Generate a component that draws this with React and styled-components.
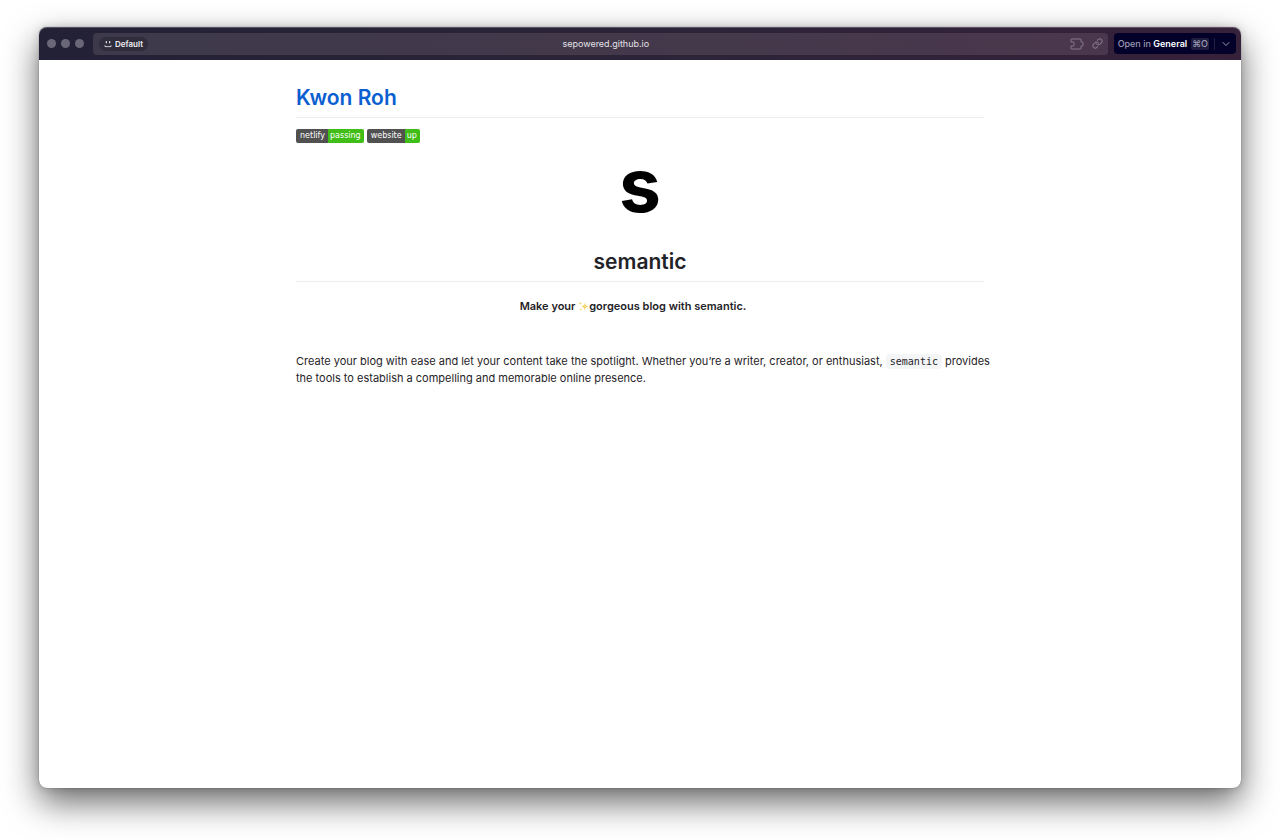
import React from 'react';
import styled, { createGlobalStyle } from 'styled-components';

const GlobalStyle = createGlobalStyle`
  *, *::before, *::after { box-sizing: border-box; }
  body {
    margin: 0;
    background: #fff;
    color: #1f2328;
    font-family: Inter, "Liberation Sans", sans-serif;
  }
  button { border: 0; padding: 0; background: none; font: inherit; color: inherit; cursor: pointer; }
  a { color: inherit; text-decoration: none; }
`;

const Desktop = styled.div`
  display: flex;
  min-height: 100vh;
  padding: 27px 39px 52px;
  overflow: hidden;
`;

const Window = styled.div`
  flex: 1;
  min-width: 0;
  display: flex;
  flex-direction: column;
  background: #fff;
  border-radius: 8px;
  box-shadow: 0 0 1px 0 rgba(0, 0, 0, 0.6), 0 0 8px rgba(0, 0, 0, 0.15), 0 14px 34px rgba(0, 0, 0, 0.6);
`;

const TitleBar = styled.header`
  display: flex;
  align-items: center;
  height: 33px;
  padding: 0 5px 0 8px;
  border-radius: 8px 8px 0 0;
  box-shadow: inset 0 1px 0 rgba(255, 255, 255, 0.22);
  background: linear-gradient(90deg, #232136 0%, #2b2438 50%, #36213a 100%);
`;

const Lights = styled.div`
  display: flex;
  gap: 5px;
  margin-right: 9px;
`;

const Light = styled.button`
  width: 9px;
  height: 9px;
  border-radius: 50%;
  background: #6a6878;
`;

const AddressBar = styled.div`
  flex: 1;
  display: grid;
  grid-template-columns: 1fr auto 1fr;
  align-items: center;
  height: 22px;
  margin-right: 6px;
  padding: 0 5px 0 6px;
  border-radius: 4px;
  background: linear-gradient(90deg, #3d394b 0%, #43394b 50%, #4b374d 100%);
`;

const ProfileChip = styled.button`
  justify-self: start;
  display: flex;
  align-items: center;
  gap: 3px;
  height: 14px;
  padding: 0 5px;
  border-radius: 7px;
  background: #302d3d;
  color: #f0eff3;
  font-size: 8px;
  font-weight: 600;
`;

const Url = styled.button`
  padding-left: 10px;
  color: #e3e0e6;
  font-size: 9px;
`;

const Actions = styled.div`
  justify-self: end;
  display: flex;
  align-items: center;
  gap: 8px;
  color: #85798a;
`;

const IconButton = styled.button`
  display: flex;
`;

const OpenIn = styled.div`
  display: flex;
  align-items: center;
  height: 21px;
  border-radius: 4px;
  background: #03002a;
  color: #9c9bb2;
  font-size: 9px;
  font-weight: 500;
`;

const OpenButton = styled.button`
  display: flex;
  align-items: center;
  gap: 4px;
  height: 100%;
  padding: 0 5px 0 4px;

  strong { color: #fff; font-weight: 600; }
`;

const Shortcut = styled.kbd`
  padding: 0 1px;
  border-radius: 2px;
  background: #1f1c40;
  font-family: Inter, "DejaVu Sans", sans-serif;
  font-size: 9px;
  line-height: 12px;
`;

const MenuButton = styled.button`
  display: flex;
  align-items: center;
  height: 12px;
  padding: 0 6px 0 7px;
  border-left: 1px solid #24213f;
`;

const Page = styled.main`
  width: 100%;
  max-width: 688px;
  margin: 0 auto;
  padding: 22px 0 28px;
`;

const Heading = styled.h1`
  margin: 0 0 11px;
  padding-bottom: 3px;
  border-bottom: 1px solid #eaedf0;
  font-size: 21px;
  font-weight: 600;
  line-height: 32px;
  text-align: ${(p) => (p.$center ? 'center' : 'left')};
  color: ${(p) => (p.$link ? '#0c5fd1' : 'inherit')};
`;

const Badges = styled.div`
  display: flex;
  gap: 3px;
  margin-bottom: 12px;
`;

const Badge = styled.a`
  display: flex;
  height: 14px;
  border-radius: 2px;
  overflow: hidden;
  color: #fff;
  font-family: "DejaVu Sans", sans-serif;
  font-size: 8px;
  line-height: 14px;
`;

const BadgePart = styled.span`
  padding: ${(p) => (p.$status ? '0 3px 0 2px' : '0 3px 0 4px')};
  background: ${(p) => (p.$status ? '#40bd16' : '#515151')};
`;

const Logo = styled.div`
  height: 91px;
  color: #000;
  font-size: 75px;
  font-weight: 700;
  line-height: 60px;
  text-align: center;
`;

const Tagline = styled.p`
  display: flex;
  justify-content: center;
  align-items: center;
  margin: 16px 0 38px;
  padding-right: 14px;
  font-size: 11px;
  font-weight: 600;
  line-height: 17px;
  white-space: pre;
`;

const Intro = styled.p`
  margin: 0 -10px 0 0;
  font-size: 11px;
  line-height: 17px;
`;

const Code = styled.code`
  padding: 2px 4px;
  border-radius: 4px;
  background: #f4f5f6;
  font-family: "DejaVu Sans Mono", monospace;
  font-size: 10px;
`;

const FaceIcon = () => (
  <svg width="8" height="8" viewBox="0 0 8 8" fill="none" stroke="currentColor" strokeWidth="0.8" aria-hidden="true">
    <path d="M2.5 1v2.4M5.5 1v2.4M2.5 2.2H1.4M6.6 2.2H5.5M1 5.2v1.4h6V5.2" />
  </svg>
);

const PuzzleIcon = () => (
  <svg width="14" height="12" viewBox="0 0 14 12" fill="none" stroke="currentColor" strokeLinejoin="round" aria-hidden="true">
    <path d="M1 4V1.500q0-.5.5-.5h9q.5 0 .5.500V4h1.500q.5 0 .5.500v3q0 .5-.5.500H11v2.500q0 .5-.5.500h-9q-.5 0-.5-.500V8h2.500q.5 0 .5-.500v-3Q4 4 3.500 4Z" />
  </svg>
);

const LinkIcon = () => (
  <svg width="11" height="11" viewBox="0 0 24 24" fill="none" stroke="currentColor" strokeWidth="2.2" strokeLinecap="round" aria-hidden="true">
    <path d="M10 13a5 5 0 0 0 7.540.540l3-3a5 5 0 0 0-7.070-7.070l-1.720 1.710" />
    <path d="M14 11a5 5 0 0 0-7.540-.540l-3 3a5 5 0 0 0 7.070 7.070l1.710-1.710" />
  </svg>
);

const ChevronIcon = () => (
  <svg width="8" height="6" viewBox="0 0 8 6" fill="none" stroke="currentColor" strokeWidth="1" strokeLinecap="round" strokeLinejoin="round" aria-hidden="true">
    <path d="M1 1.500 4 4.500 7 1.500" />
  </svg>
);

const SparklesIcon = () => (
  <svg width="11" height="11" viewBox="0 0 11 11" fill="#f7d774" aria-label="sparkles" role="img">
    <path d="M6.800 1.800Q7.300 5 10.600 5.500 7.300 6 6.800 9.400 6.300 6 3 5.500 6.300 5 6.800 1.800Z" />
    <path d="M2.400.800Q2.600 2.200 4 2.500 2.600 2.800 2.400 4.200 2.200 2.800.800 2.500 2.200 2.200 2.400.800ZM2.800 7.200Q3 8.400 4.200 8.600 3 8.800 2.800 10 2.600 8.800 1.400 8.600 2.600 8.400 2.800 7.200Z" />
  </svg>
);

const badges = [
  { label: 'netlify', status: 'passing' },
  { label: 'website', status: 'up' },
];

export default function App() {
  return (
    <>
      <GlobalStyle />
      <Desktop>
        <Window>
          <TitleBar>
            <Lights>
              {['Close', 'Minimize', 'Zoom'].map((name) => (
                <Light key={name} aria-label={name} />
              ))}
            </Lights>
            <AddressBar>
              <ProfileChip><FaceIcon />Default</ProfileChip>
              <Url>sepowered.github.io</Url>
              <Actions>
                <IconButton aria-label="Extensions"><PuzzleIcon /></IconButton>
                <IconButton aria-label="Copy link"><LinkIcon /></IconButton>
              </Actions>
            </AddressBar>
            <OpenIn>
              <OpenButton>
                <span>Open in <strong>General</strong></span>
                <Shortcut>⌘O</Shortcut>
              </OpenButton>
              <MenuButton aria-label="Choose space"><ChevronIcon /></MenuButton>
            </OpenIn>
          </TitleBar>
          <Page>
            <Heading $link><a href="#home">Kwon Roh</a></Heading>
            <Badges>
              {badges.map(({ label, status }) => (
                <Badge key={label} href={`#${label}`}>
                  <BadgePart>{label}</BadgePart>
                  <BadgePart $status>{status}</BadgePart>
                </Badge>
              ))}
            </Badges>
            <Logo>s</Logo>
            <Heading as="h2" $center>semantic</Heading>
            <Tagline>Make your <SparklesIcon />gorgeous blog with semantic.</Tagline>
            <Intro>
              Create your blog with ease and let your content take the spotlight. Whether you’re a writer, creator, or
              enthusiast, <Code>semantic</Code> provides the tools to establish a compelling and memorable online presence.
            </Intro>
          </Page>
        </Window>
      </Desktop>
    </>
  );
}
